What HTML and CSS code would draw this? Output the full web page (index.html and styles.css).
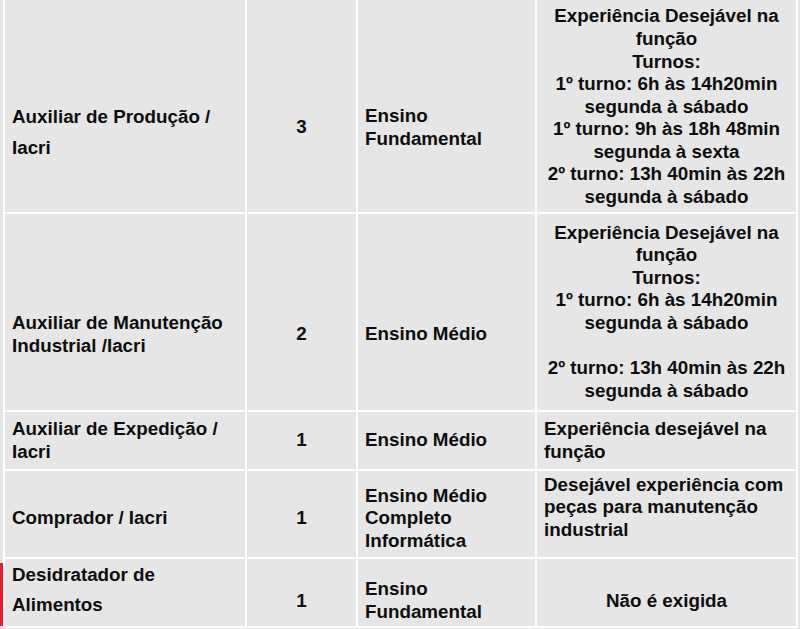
FILE: index.html
```html
<!DOCTYPE html>
<html lang="pt-BR">
<head>
<meta charset="utf-8">
<title>Vagas</title>
<link rel="stylesheet" href="styles.css">
</head>
<body>
<table class="vagas">
  <colgroup>
    <col class="c-cargo">
    <col class="c-qtd">
    <col class="c-esc">
    <col class="c-req">
  </colgroup>
  <tbody>
    <tr class="r1">
      <td class="lh31 pt51">Auxiliar de Produção / Iacri</td>
      <td class="center pt43">3</td>
      <td class="pt43">Ensino Fundamental</td>
      <td class="center pt2">Experiência Desejável na função<br>Turnos:<br>1º turno: 6h às 14h20min<br>segunda à sábado<br>1º turno: 9h às 18h 48min<br>segunda à sexta<br>2º turno: 13h 40min às 22h<br>segunda à sábado</td>
    </tr>
    <tr class="r2">
      <td class="pt45">Auxiliar de Manutenção Industrial /Iacri</td>
      <td class="center pt44">2</td>
      <td class="pt44">Ensino Médio</td>
      <td class="center">Experiência Desejável na função<br>Turnos:<br>1º turno: 6h às 14h20min<br>segunda à sábado<br><br>2º turno: 13h 40min às 22h<br>segunda à sábado</td>
    </tr>
    <tr class="r3">
      <td>Auxiliar de Expedição / Iacri</td>
      <td class="center">1</td>
      <td>Ensino Médio</td>
      <td>Experiência desejável na função</td>
    </tr>
    <tr class="r4">
      <td class="pt9">Comprador / Iacri</td>
      <td class="center pt9">1</td>
      <td class="pt9">Ensino Médio Completo Informática</td>
      <td class="pb13">Desejável experiência com peças para manutenção industrial</td>
    </tr>
    <tr class="r5">
      <td class="lh30 pb6 marked">Desidratador de Alimentos</td>
      <td class="center pt18">1</td>
      <td class="pt17">Ensino Fundamental</td>
      <td class="center pt18">Não é exigida</td>
    </tr>
  </tbody>
</table>
</body>
</html>
```

FILE: styles.css
```css
html, body {
  margin: 0;
  padding: 0;
  background: #e6e6e6;
  overflow: hidden;
}

.vagas {
  table-layout: fixed;
  width: 795px;
  margin: -2px 0 0 3px;
  border-collapse: separate;
  border-spacing: 2px;
  background: #ffffff;
  font-family: "Liberation Sans", Arial, sans-serif;
  font-weight: bold;
  font-size: 18.8px;
  line-height: 22.6px;
  color: #0d0d0d;
}

.c-cargo { width: 240px; }
.c-qtd { width: 109px; }
.c-esc { width: 177px; }
.c-req { width: 259px; }

.vagas td {
  background: #e6e6e6;
  padding: 0 7px;
  vertical-align: middle;
  text-align: left;
}

.r1 { height: 212px; }
.r2 { height: 196px; }
.r3 { height: 57px; }
.r4 { height: 86px; }
.r5 { height: 67px; }

.vagas td.center { text-align: center; }

.vagas td.lh31 { line-height: 31px; }
.vagas td.lh30 { line-height: 30px; }

.vagas td.pt51 { padding-top: 51px; }
.vagas td.pt45 { padding-top: 45px; }
.vagas td.pt44 { padding-top: 44px; }
.vagas td.pt43 { padding-top: 43px; }
.vagas td.pt18 { padding-top: 18px; }
.vagas td.pt17 { padding-top: 17px; }
.vagas td.pt9 { padding-top: 9px; }
.vagas td.pt2 { padding-top: 2px; }
.vagas td.pb13 { padding-bottom: 13px; }
.vagas td.pb6 { padding-bottom: 6px; }

.vagas td.marked { position: relative; }
.vagas td.marked::before {
  content: "";
  position: absolute;
  left: -5px;
  top: 4px;
  bottom: 0;
  width: 3px;
  background: #e3202c;
}
```
